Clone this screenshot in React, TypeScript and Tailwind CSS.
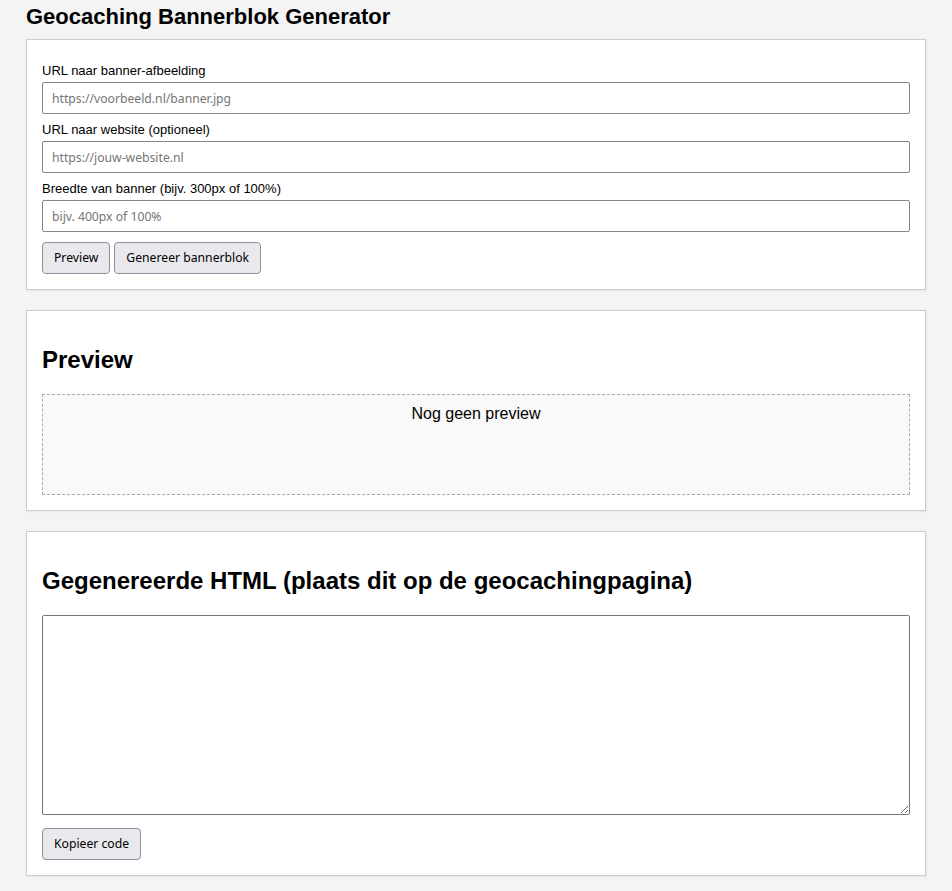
import { useState } from "react";

const inputClass =
  "block w-full h-[32px] border border-[#858585] rounded-[2px] bg-white px-[9px] text-[12.2px] text-black placeholder:text-[#757575] font-['Noto_Sans',sans-serif] outline-none";

const buttonClass =
  "h-[32px] px-[11px] border border-[#8f8f9d] rounded-[4px] bg-[#e9e9ed] text-[12.2px] text-black font-['Noto_Sans',sans-serif] leading-none";

function Field({ label, placeholder, value, onChange }: { label: string; placeholder: string; value: string; onChange: (v: string) => void }) {
  return (
    <div>
      <label className="block pt-[8px] pb-[4px] text-[13px] leading-[15px]">{label}</label>
      <input className={inputClass} placeholder={placeholder} value={value} onChange={(e) => onChange(e.target.value)} />
    </div>
  );
}

export default function App() {
  const [img, setImg] = useState("");
  const [site, setSite] = useState("");
  const [width, setWidth] = useState("");
  const [code, setCode] = useState("");

  return (
    <div className="min-h-screen bg-[#f4f4f4] font-['Liberation_Sans',Arial,sans-serif] text-black">
      <div className="max-w-[900px] mx-auto pt-[4px] pb-[16px]">
        <h1 className="text-[22px] leading-[26px] font-bold mb-[9px]">Geocaching Bannerblok Generator</h1>

        <div className="bg-white border border-[#ccc] shadow-[1px_1px_2px_rgba(0,0,0,0.06)] p-[15px]">
          <Field label="URL naar banner-afbeelding" placeholder="https://voorbeeld.nl/banner.jpg" value={img} onChange={setImg} />
          <Field label="URL naar website (optioneel)" placeholder="https://jouw-website.nl" value={site} onChange={setSite} />
          <Field label="Breedte van banner (bijv. 300px of 100%)" placeholder="bijv. 400px of 100%" value={width} onChange={setWidth} />
          <div className="flex gap-[4px] mt-[10px]">
            <button className={buttonClass}>Preview</button>
            <button className={buttonClass}>Genereer bannerblok</button>
          </div>
        </div>

        <div className="mt-[20px] bg-white border border-[#ccc] shadow-[1px_1px_2px_rgba(0,0,0,0.06)] p-[15px]">
          <h2 className="mt-[20px] mb-[20px] text-[24px] leading-[28px] font-bold">Preview</h2>
          <div className="h-[101px] border border-dashed border-[#aaa] bg-[#f9f9f9] p-[10px] text-center text-[16px] leading-[18px]">
            Nog geen preview
          </div>
        </div>

        <div className="mt-[20px] bg-white border border-[#ccc] shadow-[1px_1px_2px_rgba(0,0,0,0.06)] p-[15px]">
          <h2 className="mt-[20px] mb-[20px] text-[24px] leading-[28px] font-bold">
            Gegenereerde HTML (plaats dit op de geocachingpagina)
          </h2>
          <textarea
            className="block w-full h-[200px] border border-[#767676] rounded-[2px] bg-white p-[4px] text-[13px] font-['Liberation_Mono',monospace] outline-none"
            value={code}
            onChange={(e) => setCode(e.target.value)}
          />
          <div className="mt-[13px]">
            <button className={buttonClass}>Kopieer code</button>
          </div>
        </div>
      </div>
    </div>
  );
}
